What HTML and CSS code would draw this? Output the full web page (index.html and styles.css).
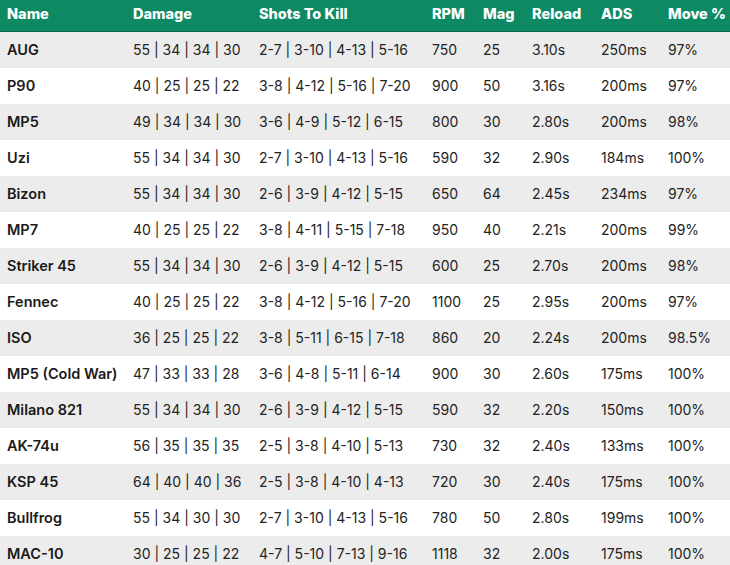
FILE: index.html
```html
<!DOCTYPE html>
<html>
<head>
<meta charset="utf-8">
<link rel="stylesheet" href="styles.css">
</head>
<body>
<table class="smg">
<colgroup>
<col class="c-name"><col class="c-dmg"><col class="c-stk"><col class="c-rpm"><col class="c-mag"><col class="c-rel"><col class="c-ads"><col class="c-mov">
</colgroup>
<thead>
<tr><th>Name</th><th>Damage</th><th>Shots To Kill</th><th>RPM</th><th>Mag</th><th>Reload</th><th>ADS</th><th>Move %</th></tr>
</thead>
<tbody>
<tr><td class="n">AUG</td><td>55 | 34 | 34 | 30</td><td>2-7 | 3-10 | 4-13 | 5-16</td><td>750</td><td>25</td><td>3.10s</td><td>250ms</td><td>97%</td></tr>
<tr><td class="n">P90</td><td>40 | 25 | 25 | 22</td><td>3-8 | 4-12 | 5-16 | 7-20</td><td>900</td><td>50</td><td>3.16s</td><td>200ms</td><td>97%</td></tr>
<tr><td class="n">MP5</td><td>49 | 34 | 34 | 30</td><td>3-6 | 4-9 | 5-12 | 6-15</td><td>800</td><td>30</td><td>2.80s</td><td>200ms</td><td>98%</td></tr>
<tr><td class="n">Uzi</td><td>55 | 34 | 34 | 30</td><td>2-7 | 3-10 | 4-13 | 5-16</td><td>590</td><td>32</td><td>2.90s</td><td>184ms</td><td>100%</td></tr>
<tr><td class="n">Bizon</td><td>55 | 34 | 34 | 30</td><td>2-6 | 3-9 | 4-12 | 5-15</td><td>650</td><td>64</td><td>2.45s</td><td>234ms</td><td>97%</td></tr>
<tr><td class="n">MP7</td><td>40 | 25 | 25 | 22</td><td>3-8 | 4-11 | 5-15 | 7-18</td><td>950</td><td>40</td><td>2.21s</td><td>200ms</td><td>99%</td></tr>
<tr><td class="n">Striker 45</td><td>55 | 34 | 34 | 30</td><td>2-6 | 3-9 | 4-12 | 5-15</td><td>600</td><td>25</td><td>2.70s</td><td>200ms</td><td>98%</td></tr>
<tr><td class="n">Fennec</td><td>40 | 25 | 25 | 22</td><td>3-8 | 4-12 | 5-16 | 7-20</td><td>1100</td><td>25</td><td>2.95s</td><td>200ms</td><td>97%</td></tr>
<tr><td class="n">ISO</td><td>36 | 25 | 25 | 22</td><td>3-8 | 5-11 | 6-15 | 7-18</td><td>860</td><td>20</td><td>2.24s</td><td>200ms</td><td>98.5%</td></tr>
<tr><td class="n">MP5 (Cold War)</td><td>47 | 33 | 33 | 28</td><td>3-6 | 4-8 | 5-11 | 6-14</td><td>900</td><td>30</td><td>2.60s</td><td>175ms</td><td>100%</td></tr>
<tr><td class="n">Milano 821</td><td>55 | 34 | 34 | 30</td><td>2-6 | 3-9 | 4-12 | 5-15</td><td>590</td><td>32</td><td>2.20s</td><td>150ms</td><td>100%</td></tr>
<tr><td class="n">AK-74u</td><td>56 | 35 | 35 | 35</td><td>2-5 | 3-8 | 4-10 | 5-13</td><td>730</td><td>32</td><td>2.40s</td><td>133ms</td><td>100%</td></tr>
<tr><td class="n">KSP 45</td><td>64 | 40 | 40 | 36</td><td>2-5 | 3-8 | 4-10 | 4-13</td><td>720</td><td>30</td><td>2.40s</td><td>175ms</td><td>100%</td></tr>
<tr><td class="n">Bullfrog</td><td>55 | 34 | 30 | 30</td><td>2-7 | 3-10 | 4-13 | 5-16</td><td>780</td><td>50</td><td>2.80s</td><td>199ms</td><td>100%</td></tr>
<tr><td class="n">MAC-10</td><td>30 | 25 | 25 | 22</td><td>4-7 | 5-10 | 7-13 | 9-16</td><td>1118</td><td>32</td><td>2.00s</td><td>175ms</td><td>100%</td></tr>
</tbody>
</table>
</body>
</html>
```
FILE: styles.css
```css
html, body {
  margin: 0;
  padding: 0;
  background: #ffffff;
}
body {
  font-family: Inter, "Noto Sans", sans-serif;
  color: #222;
  overflow: hidden;
}
.smg {
  width: 730px;
  border-collapse: collapse;
  table-layout: fixed;
  font-size: 14px;
}
.c-name { width: 126px; }
.c-dmg { width: 126px; }
.c-stk { width: 173px; }
.c-rpm { width: 51px; }
.c-mag { width: 49px; }
.c-rel { width: 69px; }
.c-ads { width: 67px; }
.c-mov { width: 69px; }
.smg th {
  background: #0d8a63;
  color: #fff;
  font-size: 14.5px;
  font-weight: 800;
  text-align: left;
  height: 31px;
  padding: 0 0 3px 7px;
  border-bottom: 1px solid #066a4a;
  white-space: nowrap;
  box-sizing: border-box;
}
.smg td {
  height: 36px;
  padding: 0 0 0 7px;
  white-space: nowrap;
  font-weight: 400;
  color: #232323;
}
.smg td.n {
  font-size: 14.5px;
  font-weight: 600;
  color: #1a1a1a;
}
.smg tbody tr:nth-child(odd) td {
  background: #ececec;
}
.smg tbody tr:nth-child(even) td {
  background: #ffffff;
}
```
